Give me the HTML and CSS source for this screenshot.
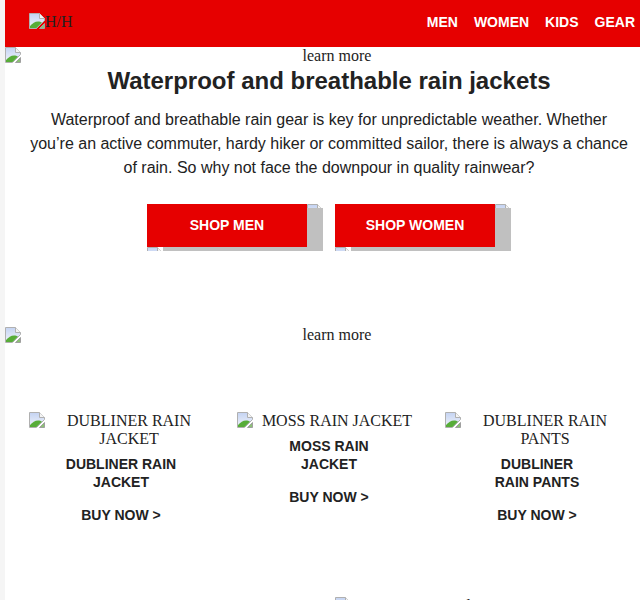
FILE: index.html
```html
<!DOCTYPE html>
<html lang="en">
<head>
    <meta charset="UTF-8">
    <meta name="viewport" content="width=device-width, initial-scale=1.0">
    <title>Rain Jackets</title>
    <link rel="stylesheet" href="styles.css">
</head>
<body>
    <svg class="icon-defs" width="0" height="0" aria-hidden="true">
        <defs>
            <linearGradient id="sky" x1="0" y1="0" x2="0" y2="1">
                <stop offset="0" stop-color="#c4d3f2"/>
                <stop offset="1" stop-color="#f2f5fc"/>
            </linearGradient>
            <symbol id="broken" viewBox="0 0 16 16">
                <path d="M.5.5h10l5 5v2L7.500 15.500h-7z" fill="url(#sky)" stroke="#b0b0b0"/>
                <path d="M10.500.5v5h5" fill="#f4f4f4" stroke="#b0b0b0"/>
                <path d="M1 15v-2C3.500 10.500 6 8.500 9 8.500c1.500 0 3 .5 4 1L7.500 15z" fill="#57ad38"/>
                <path d="M15.500 10.500v5h-5z" fill="#8cc274" stroke="#a0a0a0"/>
            </symbol>
        </defs>
    </svg>

    <div class="page">
        <header class="site-header">
            <a class="logo" href="#"><svg class="broken-icon"><use href="#broken"/></svg><span>H/H</span></a>
            <nav class="main-nav">
                <a href="#">MEN</a>
                <a href="#">WOMEN</a>
                <a href="#">KIDS</a>
                <a href="#">GEAR</a>
            </nav>
        </header>

        <div class="banner">
            <svg class="broken-icon"><use href="#broken"/></svg>
            <span class="alt-text">learn more</span>
        </div>

        <section class="intro">
            <h1>Waterproof and breathable rain jackets</h1>
            <p>Waterproof and breathable rain gear is key for unpredictable weather. Whether you’re an active commuter, hardy hiker or committed sailor, there is always a chance of rain. So why not face the downpour in quality rainwear?</p>
            <div class="shop-links">
                <div class="shop-btn">
                    <a href="#">SHOP MEN</a>
                    <span class="corner corner-top"><svg class="broken-icon"><use href="#broken"/></svg></span>
                    <span class="corner corner-bottom"><svg class="broken-icon"><use href="#broken"/></svg></span>
                </div>
                <div class="shop-btn">
                    <a href="#">SHOP WOMEN</a>
                    <span class="corner corner-top"><svg class="broken-icon"><use href="#broken"/></svg></span>
                    <span class="corner corner-bottom"><svg class="broken-icon"><use href="#broken"/></svg></span>
                </div>
            </div>
        </section>

        <div class="banner banner-second">
            <svg class="broken-icon"><use href="#broken"/></svg>
            <span class="alt-text">learn more</span>
        </div>

        <section class="products">
            <article class="product">
                <div class="product-img">
                    <svg class="broken-icon"><use href="#broken"/></svg>
                    <span>DUBLINER RAIN JACKET</span>
                </div>
                <h2>DUBLINER RAIN<br>JACKET</h2>
                <a href="#">BUY NOW &gt;</a>
            </article>
            <article class="product">
                <div class="product-img">
                    <svg class="broken-icon"><use href="#broken"/></svg>
                    <span>MOSS RAIN JACKET</span>
                </div>
                <h2>MOSS RAIN<br>JACKET</h2>
                <a href="#">BUY NOW &gt;</a>
            </article>
            <article class="product">
                <div class="product-img">
                    <svg class="broken-icon"><use href="#broken"/></svg>
                    <span>DUBLINER RAIN PANTS</span>
                </div>
                <h2>DUBLINER<br>RAIN PANTS</h2>
                <a href="#">BUY NOW &gt;</a>
            </article>
        </section>

        <div class="banner banner-half">
            <svg class="broken-icon"><use href="#broken"/></svg>
            <span class="alt-text">learn more</span>
        </div>
    </div>
</body>
</html>
```

FILE: styles.css
```css
html, body {
    margin: 0;
    padding: 0;
    overflow-x: hidden;
}

body {
    background: #f5f5f5;
    font-family: 'Liberation Sans', Arial, sans-serif;
    color: #222;
}

.icon-defs {
    position: absolute;
}

.page {
    margin-left: 5px;
    background: #fff;
    min-height: 720px;
}

.broken-icon {
    display: block;
    flex: none;
    width: 16px;
    height: 16px;
}

.site-header {
    display: flex;
    justify-content: space-between;
    align-items: center;
    box-sizing: border-box;
    height: 47px;
    padding: 0 5px 4px 24px;
    background: #e60000;
}

.logo {
    display: flex;
    align-items: flex-start;
    font-family: 'Liberation Serif', 'Times New Roman', serif;
    font-size: 16px;
    line-height: 18px;
    color: #222;
    text-decoration: none;
}

.main-nav {
    display: flex;
    gap: 16px;
}

.main-nav a {
    color: #fff;
    font-size: 14px;
    font-weight: bold;
    text-decoration: none;
}

.banner {
    display: flex;
    font-family: 'Liberation Serif', 'Times New Roman', serif;
    font-size: 16px;
    line-height: 18px;
}

.alt-text {
    flex: 1;
    padding-left: 13px;
    text-align: center;
}

.intro {
    width: 600px;
    margin-left: 24px;
    text-align: center;
}

.intro h1 {
    margin: 2px 0 0;
    font-size: 24px;
    line-height: 28px;
}

.intro p {
    margin: 13px 0 0;
    font-size: 16px;
    line-height: 24px;
}

.shop-links {
    display: flex;
    justify-content: center;
    gap: 12px;
    margin-top: 24px;
}

.shop-btn {
    position: relative;
    width: 176px;
    height: 47px;
    background: #c0c0c0;
}

.shop-btn a {
    display: block;
    width: 160px;
    height: 43px;
    background: #e60000;
    color: #fff;
    font-size: 14px;
    font-weight: bold;
    line-height: 43px;
    text-decoration: none;
}

.corner {
    position: absolute;
    width: 16px;
    height: 4px;
    overflow: hidden;
    background: #fff;
}

.corner-top {
    top: 0;
    right: 0;
}

.corner-bottom {
    bottom: 0;
    left: 0;
}

.banner-second {
    margin-top: 75px;
}

.banner-second .broken-icon {
    margin-top: 1px;
}

.products {
    display: grid;
    grid-template-columns: repeat(3, 184px);
    gap: 24px;
    align-items: start;
    margin: 68px 0 0 24px;
    text-align: center;
}

.product-img {
    display: flex;
    font-family: 'Liberation Serif', 'Times New Roman', serif;
    font-size: 16px;
    line-height: 18px;
}

.product-img span {
    flex: 1;
}

.product h2 {
    margin: 7px 0 15px;
    font-size: 14px;
    line-height: 18px;
}

.product a {
    color: #222;
    font-size: 14px;
    font-weight: bold;
    line-height: 18px;
    text-decoration: none;
}

.banner-half {
    margin: 73px 0 0 330px;
}

.banner-half .alt-text {
    padding-left: 0;
    margin-right: -11px;
}
```
